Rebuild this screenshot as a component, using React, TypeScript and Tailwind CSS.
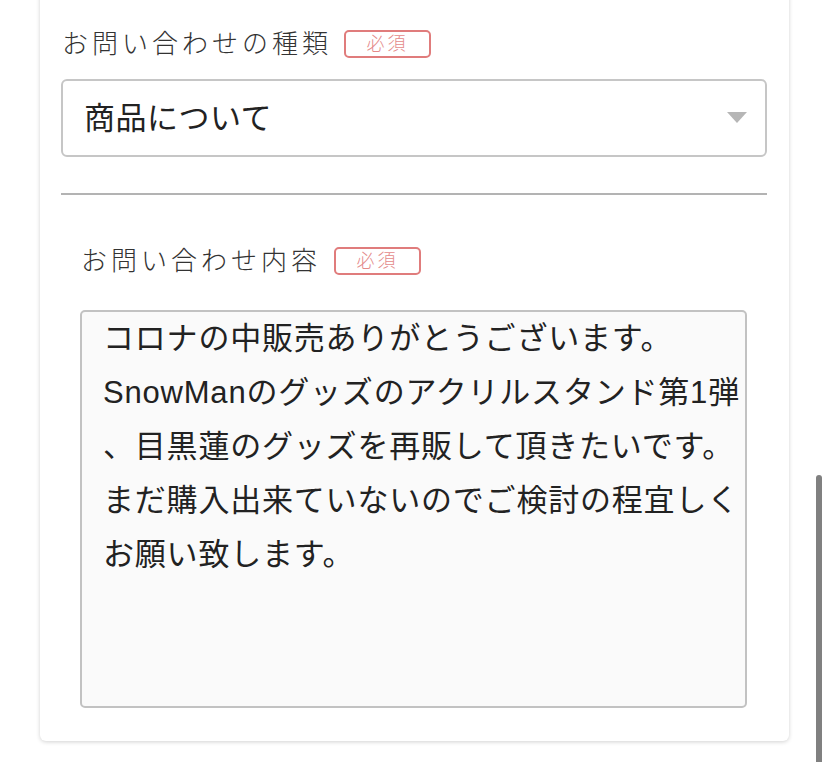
import React from "react";

const message = [
  "コロナの中販売ありがとうございます。",
  "SnowManのグッズのアクリルスタンド第1弾",
  "、目黒蓮のグッズを再販して頂きたいです。",
  "まだ購入出来ていないのでご検討の程宜しく",
  "お願い致します。",
].join("\n");

const fontStack = {
  fontFamily:
    '"Liberation Sans", "Noto Sans CJK JP", "Noto Sans CJK SC", sans-serif',
};

const RequiredBadge = () => (
  <span className="inline-flex h-[28px] w-[87px] items-center justify-center rounded-[5px] border-2 border-[#e07c7c] text-[18px] font-light tracking-[3px] text-[#e48a8a]">
    必須
  </span>
);

export default function App() {
  return (
    <div className="relative min-h-[762px] overflow-hidden bg-white" style={fontStack}>
      <div className="pl-[40px] pr-[39px]">
        {/* Form card */}
        <div className="mt-[-12px] rounded-b-[6px] bg-white pb-[33px] pt-[42px] shadow-[0_1px_4px_rgba(0,0,0,0.18)]">
          {/* Inquiry type */}
          <div className="px-[21px] pr-[22px]">
            <div className="flex items-center gap-[12px] pl-[1px]">
              <span className="text-[26px] font-light leading-none tracking-[4px] text-[#333]">
                お問い合わせの種類
              </span>
              <RequiredBadge />
            </div>
            <div className="mt-[21px] flex h-[78px] items-center justify-between rounded-[6px] border-2 border-[#c6c6c6] pl-[21px] pr-[18px]">
              <span className="text-[31px] leading-none tracking-[0.5px] text-[#222]">
                商品について
              </span>
              <svg width="20" height="11" viewBox="0 0 20 11" className="mt-[-2px]">
                <path d="M0 0 H20 L10 11 Z" fill="#b6b6b6" />
              </svg>
            </div>
            <div className="mt-[36px] h-[2px] bg-[#b3b3b3]" />
          </div>

          {/* Inquiry content */}
          <div className="pl-[40px] pr-[42px]">
            <div className="mt-[52px] flex items-center gap-[13px] pl-[1px]">
              <span className="text-[26px] font-light leading-none tracking-[4px] text-[#333]">
                お問い合わせ内容
              </span>
              <RequiredBadge />
            </div>
            <textarea
              readOnly
              value={message}
              className="mt-[35px] block h-[398px] w-full resize-none overflow-hidden rounded-[5px] border-2 border-[#c2c2c2] bg-[#fafafa] pl-[21px] pr-[2px] pt-0 text-[31px] leading-[54px] tracking-[0.8px] text-[#222] outline-none"
              style={fontStack}
            />
          </div>
        </div>
      </div>

      {/* Overlay scrollbar */}
      <div className="absolute right-[6px] top-[475px] h-[300px] w-[6px] rounded-full bg-[#808080]" />
    </div>
  );
}
